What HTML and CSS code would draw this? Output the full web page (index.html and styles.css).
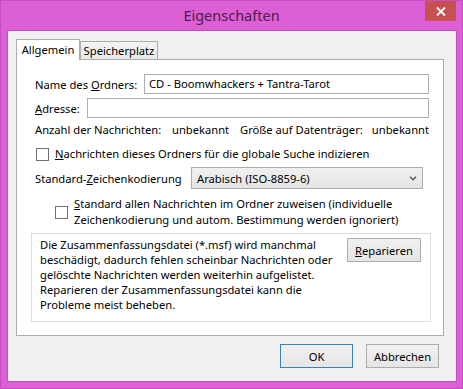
FILE: index.html
```html
<!DOCTYPE html>
<html lang="de">
<head>
    <meta charset="UTF-8">
    <title>Eigenschaften</title>
    <link rel="stylesheet" href="styles.css">
</head>
<body>
    <div class="window">
        <div class="titlebar">
            <span></span>
            <span class="title">Eigenschaften</span>
            <div class="controls">
                <div class="close">
                    <svg width="10" height="9" viewBox="0 0 10 9">
                        <path d="M1 0.5 L9 8.5 M9 0.5 L1 8.5" stroke="#fff" stroke-width="1.8" fill="none"/>
                    </svg>
                </div>
            </div>
        </div>

        <div class="client">
            <div class="tabs">
                <div class="tab active">Allgemein</div>
                <div class="tab">Speicherplatz</div>
            </div>

            <div class="pane">
                <div class="field first">
                    <label class="lbl-name">Name des <u>O</u>rdners:</label>
                    <div class="textbox">CD - Boomwhackers + Tantra-Tarot</div>
                </div>

                <div class="field">
                    <label class="lbl-addr"><u>A</u>dresse:</label>
                    <div class="textbox"></div>
                </div>

                <div class="field info">
                    <span class="i1">Anzahl der Nachrichten:</span>
                    <span class="i2">unbekannt</span>
                    <span class="i3">Größe auf Datenträger:</span>
                    <span class="i4">unbekannt</span>
                </div>

                <div class="check check-index">
                    <span class="box"></span>
                    <span><u>N</u>achrichten dieses Ordners für die globale Suche indizieren</span>
                </div>

                <div class="field charset">
                    <label class="lbl-charset">Standard-<u>Z</u>eichenkodierung</label>
                    <div class="select">
                        <span>Arabisch (ISO-8859-6)</span>
                        <svg width="8" height="5" viewBox="0 0 8 5">
                            <path d="M1 0.8 L4 3.8 L7 0.8" stroke="#5a5a5a" stroke-width="1.5" fill="none"/>
                        </svg>
                    </div>
                </div>

                <div class="check check-apply">
                    <span class="box"></span>
                    <span><u>S</u>tandard allen Nachrichten im Ordner zuweisen (individuelle<br>Zeichenkodierung und autom. Bestimmung werden ignoriert)</span>
                </div>

                <div class="repair">
                    <p>Die Zusammenfassungsdatei (*.msf) wird manchmal<br>beschädigt, dadurch fehlen scheinbar Nachrichten oder<br>gelöschte Nachrichten werden weiterhin aufgelistet.<br>Reparieren der Zusammenfassungsdatei kann die<br>Probleme meist beheben.</p>
                    <button class="btn btn-repair"><u>R</u>eparieren</button>
                </div>
            </div>

            <div class="actions">
                <button class="btn default">OK</button>
                <button class="btn">Abbrechen</button>
            </div>
        </div>
    </div>
</body>
</html>
```

FILE: styles.css
```css
body {
    margin: 0;
    font-family: "Noto Sans", "Open Sans", sans-serif;
    font-size: 11.2px;
    color: #000;
    white-space: nowrap;
}
.window {
    width: 463px;
    height: 389px;
    box-sizing: border-box;
    border: 1px solid #c24fba;
    background: #dc5fd5;
    display: flex;
    flex-direction: column;
}
.titlebar {
    height: 29px;
    display: grid;
    grid-template-columns: 1fr auto 1fr;
}
.title {
    font-size: 14.5px;
    color: #4f1a4b;
    line-height: 29px;
}
.controls {
    display: flex;
    justify-content: flex-end;
    align-items: flex-start;
    padding-right: 6px;
}
.close {
    width: 31px;
    height: 20px;
    background: #c75050;
    display: flex;
    align-items: center;
    justify-content: center;
}
.client {
    margin: 0 5px 6px 6px;
    border: 1px solid #c451bb;
    background: #f0f0f0;
    height: 350px;
    padding: 8px 12px 0 8px;
}
.tabs {
    display: flex;
    align-items: flex-end;
    margin-bottom: -1px;
    position: relative;
    z-index: 1;
}
.tab {
    box-sizing: border-box;
    width: 78px;
    height: 18px;
    margin-bottom: 1px;
    border: 1px solid #acacac;
    border-bottom: none;
    background: linear-gradient(#f3f3f3, #e9e9e9);
    line-height: 17px;
    text-align: center;
}
.tab.active {
    width: 64px;
    height: 21px;
    margin-bottom: 0;
    background: #fff;
    line-height: 20px;
}
.pane {
    box-sizing: border-box;
    height: 277px;
    border: 1px solid #acacac;
    background: #fff;
}
.field {
    display: flex;
    align-items: center;
    margin: 4px 14px 0 18px;
}
.field.first {
    margin-top: 14px;
}
.lbl-name {
    width: 109px;
    flex: none;
}
.lbl-addr {
    width: 52px;
    flex: none;
}
.textbox {
    flex: 1;
    box-sizing: border-box;
    height: 20px;
    border: 1px solid #abadb3;
    padding: 0 4px;
    line-height: 18px;
}
.info {
    height: 16px;
    line-height: 16px;
}
.i1 { width: 137px; }
.i2 { width: 68px; }
.i3 { width: 131px; }
.i4 { margin-left: auto; }
.check {
    display: flex;
    align-items: center;
    line-height: 16px;
}
.check .box {
    width: 13px;
    height: 13px;
    box-sizing: border-box;
    border: 1px solid #707070;
    background: #fff;
    margin-right: 6px;
    flex: none;
}
.check-index {
    margin: 8px 0 0 19px;
}
.charset {
    margin-top: 5px;
}
.lbl-charset {
    width: 156px;
    flex: none;
}
.select {
    box-sizing: border-box;
    width: 232px;
    height: 22px;
    border: 1px solid #acacac;
    background: linear-gradient(#f0f0f0, #e5e5e5);
    display: flex;
    align-items: center;
    justify-content: space-between;
    padding: 0 5px 0 5px;
}
.check-apply {
    margin: 7px 0 0 38px;
}
.repair {
    box-sizing: border-box;
    margin: 5px 12px 0 14px;
    height: 89px;
    border: 1px solid #dcdcdc;
    display: flex;
    padding: 3px 9px 0 8px;
}
.repair p {
    margin: 0;
    line-height: 15px;
}
.btn {
    box-sizing: border-box;
    width: 73px;
    height: 24px;
    border: 1px solid #acacac;
    background: linear-gradient(#f0f0f0, #e5e5e5);
    font-family: inherit;
    font-size: 11.2px;
    color: #000;
    padding: 0;
}
.btn-repair {
    width: 74px;
    margin: 1px 0 0 auto;
}
.actions {
    display: flex;
    justify-content: flex-end;
    gap: 13px;
    margin-top: 8px;
    padding-right: 5px;
}
.btn.default {
    border-color: #3c7fb1;
}
```
